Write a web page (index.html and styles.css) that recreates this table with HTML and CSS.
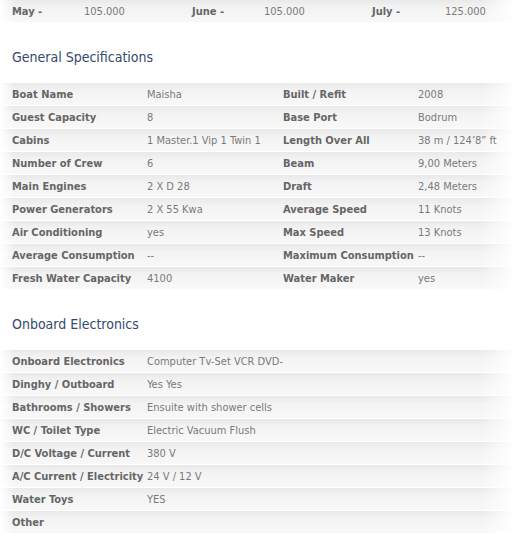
FILE: index.html
```html
<!DOCTYPE html>
<html>
<head>
<meta charset="utf-8">
<link rel="stylesheet" href="styles.css">
</head>
<body>
<div class="page">
  <div class="row prices">
    <span class="lbl">May -</span><span class="val">105.000</span>
    <span class="lbl">June -</span><span class="val">105.000</span>
    <span class="lbl">July -</span><span class="val">125.000</span>
  </div>

  <h2 class="title">General Specifications</h2>
  <div class="table">
    <div class="row spec"><span class="lbl">Boat Name</span><span class="val">Maisha</span><span class="lbl">Built / Refit</span><span class="val">2008</span></div>
    <div class="row spec"><span class="lbl">Guest Capacity</span><span class="val">8</span><span class="lbl">Base Port</span><span class="val">Bodrum</span></div>
    <div class="row spec"><span class="lbl">Cabins</span><span class="val">1 Master.1 Vip 1 Twin 1</span><span class="lbl">Length Over All</span><span class="val">38 m / 124’8” ft</span></div>
    <div class="row spec"><span class="lbl">Number of Crew</span><span class="val">6</span><span class="lbl">Beam</span><span class="val">9,00 Meters</span></div>
    <div class="row spec"><span class="lbl">Main Engines</span><span class="val">2 X D 28</span><span class="lbl">Draft</span><span class="val">2,48 Meters</span></div>
    <div class="row spec"><span class="lbl">Power Generators</span><span class="val">2 X 55 Kwa</span><span class="lbl">Average Speed</span><span class="val">11 Knots</span></div>
    <div class="row spec"><span class="lbl">Air Conditioning</span><span class="val">yes</span><span class="lbl">Max Speed</span><span class="val">13 Knots</span></div>
    <div class="row spec"><span class="lbl">Average Consumption</span><span class="val">--</span><span class="lbl">Maximum Consumption</span><span class="val">--</span></div>
    <div class="row spec"><span class="lbl">Fresh Water Capacity</span><span class="val">4100</span><span class="lbl">Water Maker</span><span class="val">yes</span></div>
  </div>

  <h2 class="title">Onboard Electronics</h2>
  <div class="table">
    <div class="row spec"><span class="lbl">Onboard Electronics</span><span class="val wide">Computer Tv-Set VCR DVD-</span></div>
    <div class="row spec"><span class="lbl">Dinghy / Outboard</span><span class="val wide">Yes Yes</span></div>
    <div class="row spec"><span class="lbl">Bathrooms / Showers</span><span class="val wide">Ensuite with shower cells</span></div>
    <div class="row spec"><span class="lbl">WC / Toilet Type</span><span class="val wide">Electric Vacuum Flush</span></div>
    <div class="row spec"><span class="lbl">D/C Voltage / Current</span><span class="val wide">380 V</span></div>
    <div class="row spec"><span class="lbl">A/C Current / Electricity</span><span class="val wide">24 V / 12 V</span></div>
    <div class="row spec"><span class="lbl">Water Toys</span><span class="val wide">YES</span></div>
    <div class="row spec"><span class="lbl">Other</span><span class="val wide"></span></div>
  </div>
</div>
</body>
</html>
```

FILE: styles.css
```css
html, body {
  margin: 0;
  padding: 0;
  background: #fff;
}
body {
  font-family: "DejaVu Sans Condensed", "DejaVu Sans", sans-serif;
  font-size: 11px;
  color: #777;
  overflow: hidden;
}
.page {
  width: 515px;
}
.row {
  display: grid;
  align-items: center;
  height: 22px;
  border-bottom: 1px solid #fff;
  background:
    linear-gradient(to right, #fff 0, rgba(255,255,255,0) 14px, rgba(255,255,255,0) calc(100% - 34px), #fff 100%),
    linear-gradient(to bottom, #e9e9e9 0, #f3f3f3 35%, #f8f8f8 100%);
}
.prices {
  grid-template-columns: 72px 108px 72px 108px 73px 1fr;
  height: 22px;
}
.spec {
  grid-template-columns: 135px 136px 135px 1fr;
}
.lbl, .val {
  padding-left: 12px;
  white-space: nowrap;
}
.lbl {
  font-weight: bold;
  color: #666;
}
.val {
  color: #7a7a7a;
}
.val.wide {
  grid-column: 2 / 5;
}
.title {
  margin: 0;
  padding: 25px 0 17px 12px;
  font-size: 14px;
  font-weight: normal;
  color: #34496b;
  line-height: 18px;
}
```
